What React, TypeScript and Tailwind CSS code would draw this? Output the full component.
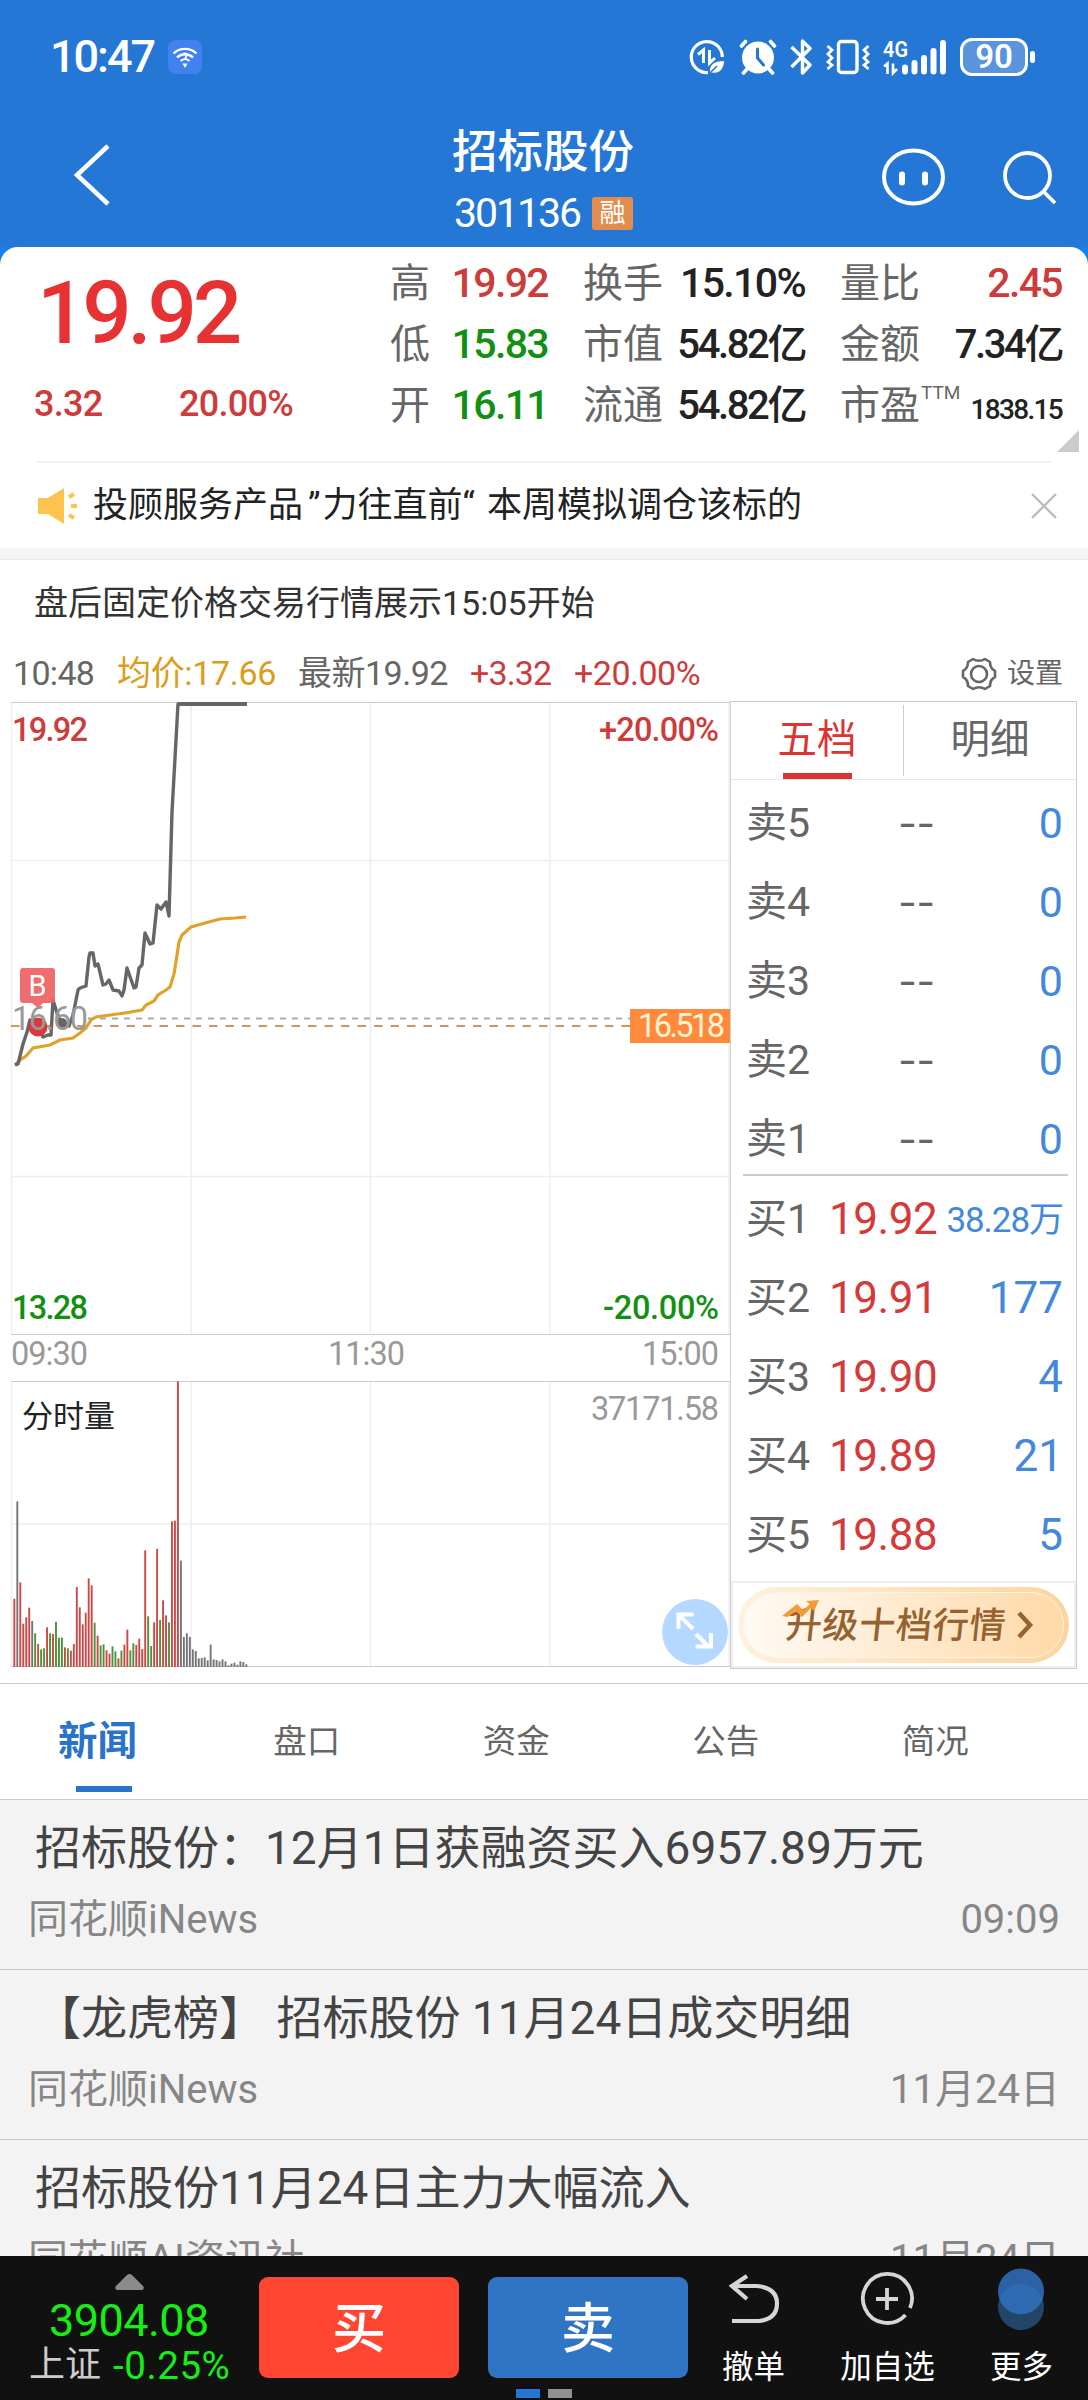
import type { ReactNode } from "react";
import { clsx } from "clsx";

const FONT = "font-['Roboto','Noto_Sans_CJK_SC',sans-serif]";
const SVG_FONT = "Roboto, 'Noto Sans CJK SC', sans-serif";

const pricePoints =
  "15,1065 18,1064 23,1044 27,1032 30,1020 37,1023 43,1037 48,1035 51,1035 53,1000 57,1013 60,1020 69,1026 73,1015 78,990 80,988 86,986 89,957 90,953 93,953 95,966 98,964 103,985 106,984 109,980 113,990 119,991 122,996 124,990 127,968 134,988 136,987 139,968 142,965 145,933 150,944 153,943 157,905 161,909 166,902 169,916 172,812 178,704 246,704";

const averagePoints =
  "15,1065 20,1060 26,1056 33,1048 50,1045 60,1040 73,1038 80,1033 86,1028 91,1020 96,1017 110,1015 125,1013 142,1010 146,1005 154,1001 158,995 166,990 170,987 174,974 177,955 179,942 182,935 191,927 205,923 220,919 235,918 246,917";

// one entry per minute: r = up, g = down, k = flat
const volumes =
  "r205 k497 r254 r130 r149 r178 k138 g101 r69 g53 g56 r119 g101 r99 g136 g88 g88 r59 g56 r49 r69 r240 r179 r128 r163 r266 r245 g133 r94 g65 g68 r50 r40 g62 g47 r26 g49 r67 r112 g50 g71 r66 r85 r54 r350 g152 g63 r134 r355 g141 r200 r155 g134 r437 r439 r857 k319 k90 k101 k90 k53 k48 k26 k27 k29 k20 k67 k23 k21 k17 k23 k17 k5 k10 k13 k7 k17 k15 k8".split(
    " "
  );

const volumeColor: Record<string, string> = {
  r: "#cb4a48",
  g: "#4f9239",
  k: "#747474",
};

const asks = ["卖5", "卖4", "卖3", "卖2", "卖1"];

const bids = [
  { label: "买1", price: "19.92", amount: "38.28万", small: true },
  { label: "买2", price: "19.91", amount: "177" },
  { label: "买3", price: "19.90", amount: "4" },
  { label: "买4", price: "19.89", amount: "21" },
  { label: "买5", price: "19.88", amount: "5" },
];

const news = [
  {
    title: "招标股份：12月1日获融资买入6957.89万元",
    source: "同花顺iNews",
    time: "09:09",
  },
  {
    title: "【龙虎榜】 招标股份 11月24日成交明细",
    source: "同花顺iNews",
    time: "11月24日",
  },
  {
    title: "招标股份11月24日主力大幅流入",
    source: "同花顺AI资讯社",
    time: "11月24日",
  },
];

function StatusBar() {
  return (
    <div className="flex h-[112px] items-center pt-[1px] pl-[50px]">
      <span className="w-[118px] text-[45px] font-medium tracking-[-0.045em]">
        10:47
      </span>
      <svg width="34" height="34" viewBox="0 0 34 34" fill="none" stroke="#fff">
        <rect width="34" height="34" rx="8" fill="#4083f0" stroke="none" />
        <path d="M5.5 13.5a16.5 16.5 0 0 1 23 0M9 17.5a11.5 11.5 0 0 1 16 0" strokeWidth="2.4" />
        <path d="M12.5 21a6.5 6.5 0 0 1 9 0M15 14.5q2-2 3.5 0c1 2-1.5 2.500-1.500 5" strokeWidth="1.8" />
        <path d="M14.500 23.500h5L17 28z" fill="#fff" stroke="none" />
      </svg>
      <div className="ml-[487px] flex items-center">
        {/* data saver */}
        <svg className="mr-[14px]" width="36" height="36" viewBox="0 0 36 36" fill="none" stroke="#fff" strokeWidth="3.2">
          <path d="M19 33.500A15.500 15.500 0 1 1 33.300 18" />
          <path d="M9 15.500l5.500-4.500v13M20.500 11v13l5.500-5" strokeWidth="3" />
          <path d="M21 34c-1-8 4-12 14-12C35 30 30 35 23 33.500z" fill="#fff" stroke="none" />
          <path d="M21 34l7-7" stroke="#2477d4" strokeWidth="1.600" />
        </svg>
        {/* alarm */}
        <svg className="mr-[13px]" width="38" height="36" viewBox="0 0 38 36" fill="none" stroke="#fff" strokeWidth="3.600" strokeLinecap="round">
          <circle cx="19" cy="18.500" r="16" fill="#fff" stroke="none" />
          <path d="M2.500 7l4-4.500M35.500 7l-4-4.500M8 30l-3.500 4M30 30l3.500 4" />
          <path d="M18.500 10v9l6 7" stroke="#2477d4" strokeWidth="3" />
        </svg>
        <svg className="mr-[13px]" width="23" height="36" viewBox="0 0 23 36" fill="none" stroke="#fff" strokeWidth="3.400" strokeLinejoin="round">
          <path d="M1.500 8L20 26l-7.500 8V2L20 9.500 1.500 28" />
        </svg>
        {/* vibrate */}
        <svg className="mr-[13px]" width="44" height="36" viewBox="0 0 44 36" fill="none" stroke="#fff" strokeWidth="3.400">
          <rect x="12.500" y="2.500" width="18.500" height="31" rx="3" />
          <path d="M1.500 7l4.500 4-4 4 4 4-4 4 4 3-4.500 4M42.500 7L38 11l4 4-4 4 4 4-4 3 4.500 4" strokeWidth="2.800" />
        </svg>
        {/* signal */}
        <svg className="overflow-visible" width="64" height="36" viewBox="0 0 64 36" fill="none" stroke="#fff">
          <text x="0" y="17.500" fontSize="22" fontWeight="600" fill="#fff" stroke="none" textLength="25" lengthAdjust="spacingAndGlyphs" fontFamily={SVG_FONT}>
            4G
          </text>
          <path d="M1 27.500l3.500-3V35M10 24.500V34l4-4" strokeWidth="2.600" />
          <path d="M22 28.500v4M31.500 24v8.500M41 19v13.500M50.500 12v20.500M60 4v28.500" strokeWidth="6" strokeLinecap="round" />
        </svg>
        <div className="ml-[13px] flex h-[38px] w-[68px] items-center justify-center rounded-[12px] border-3 border-white bg-[#5994dc] text-[33px] leading-[30px] font-semibold">
          90
        </div>
        <div className="ml-[2px] h-[12px] w-[5px] rounded-full bg-white" />
      </div>
    </div>
  );
}

function Header() {
  return (
    <div className="flex h-[135px] items-start">
      <svg className="mt-[30px] ml-[70px]" width="44" height="66" viewBox="0 0 44 66" fill="none" stroke="#fff" strokeWidth="4.500">
        <path d="M38 4L7 33l31 29" />
      </svg>
      <div className="ml-[224px] w-[412px] pl-[114px]">
        <div className="mt-[11px] text-[45.500px] leading-[60px] font-medium">
          招标股份
        </div>
        <div className="flex items-center pt-[8px] pl-[2px]">
          <span className="w-[138px] text-[41px] leading-[44px] tracking-[-0.05em]">
            301136
          </span>
          <span className="h-[33px] w-[41px] rounded-[3px] bg-[#e28d4d] text-center text-[26px] leading-[32px]">
            融
          </span>
        </div>
      </div>
      <svg className="mt-[35px] ml-[131px]" width="64" height="60" viewBox="0 0 64 60" fill="none" stroke="#fff">
        <ellipse cx="32.500" cy="30" rx="29.500" ry="26.500" strokeWidth="4" />
        <path d="M21 27.500v8M44 27.500v8" strokeWidth="6" strokeLinecap="round" />
      </svg>
      <svg className="mt-[35px] ml-[57px]" width="56" height="60" viewBox="0 0 56 60" fill="none" stroke="#fff" strokeWidth="3.800">
        <circle cx="25.500" cy="28.500" r="22.500" />
        <path d="M41.500 44.500L53 56" />
      </svg>
    </div>
  );
}

function Stat({
  label,
  value,
  color = "text-[#222]",
  children,
}: {
  label: string;
  value: string;
  color?: string;
  children?: ReactNode;
}) {
  const hasUnit = value.endsWith("亿");

  return (
    <div className="flex h-[61px] items-center justify-between whitespace-nowrap">
      <span className="flex text-[40px] leading-[61px] text-[#666]">
        {label}
        {children}
      </span>
      <span
        className={clsx(
          "font-medium",
          children && "pt-[9px] text-[28px] tracking-[-0.060em]",
          !children && hasUnit && "text-[40px] tracking-[-0.060em]",
          !children && !hasUnit && "text-[41px] tracking-[-0.040em]",
          color
        )}
      >
        {value}
      </span>
    </div>
  );
}

function Quote() {
  return (
    <div className="relative flex h-[214px] pt-[6px]">
      <div className="w-[390px] text-[#cc3c3a]">
        <div className="h-[121px] pl-[37px] text-[87px] leading-[121px] font-medium tracking-[-0.048em] text-[#e63232]">
          19.92
        </div>
        <div className="flex pl-[34px] text-[36px] leading-[60px] font-medium tracking-[-0.020em]">
          <span className="w-[145px]">3.32</span>
          <span>20.00%</span>
        </div>
      </div>
      <div className="w-[158px]">
        <Stat label="高" value="19.92" color="text-[#cc3c3a]" />
        <Stat label="低" value="15.83" color="text-[#129012]" />
        <Stat label="开" value="16.11" color="text-[#129012]" />
      </div>
      <div className="ml-[35px] w-[222px]">
        <Stat label="换手" value="15.10%" />
        <Stat label="市值" value="54.82亿" />
        <Stat label="流通" value="54.82亿" />
      </div>
      <div className="ml-[35px] w-[222px]">
        <Stat label="量比" value="2.45" color="text-[#cc3c3a]" />
        <Stat label="金额" value="7.34亿" />
        <Stat label="市盈" value="1838.15">
          <span className="ml-[1px] text-[19px] leading-[36px]">TTM</span>
        </Stat>
      </div>
      <svg className="absolute right-[9px] bottom-[9px]" width="22" height="22">
        <path d="M22 0v22H0z" fill="#cbcbcb" />
      </svg>
    </div>
  );
}

function Notice() {
  return (
    <div className="mr-[30px] ml-[35px] flex h-[85px] items-center text-[#222]">
      <svg className="ml-[3px] shrink-0" width="41" height="38" viewBox="0 0 41 38">
        <path d="M0 11h10L26 1v36L10 27H0z" fill="#fdc34e" />
        <path d="M31 10l5-3M33 19h6M31 28l5 3" stroke="#fdc34e" strokeWidth="4" />
      </svg>
      <span className="ml-[14px] pt-[2px] text-[35px] whitespace-nowrap">
        投顾服务产品<span className="mr-[2px] ml-[5px]">”</span>力往直前
        <span className="tracking-[0.100em]">“</span> 本周模拟调仓该标的
      </span>
      <svg className="ml-auto shrink-0" width="28" height="28" viewBox="0 0 28 28" stroke="#bbb" strokeWidth="2.400">
        <path d="M2 2l24 24M26 2L2 26" />
      </svg>
    </div>
  );
}

function ChartInfo() {
  return (
    <div className="flex h-[55px] items-center text-[34px] whitespace-nowrap text-[#666]">
      <span className="w-[105px] pl-[13px] tracking-[-0.020em]">10:48</span>
      <span className="w-[181px] pl-[12px] tracking-[-0.010em] text-[#dc9c1c]">
        均价:17.66
      </span>
      <span className="w-[184px] pl-[12px] tracking-[-0.015em]">
        最新19.92
      </span>
      <span className="w-[104px] tracking-[-0.025em] text-[#cc3c3a]">
        +3.32
      </span>
      <span className="tracking-[-0.015em] text-[#cc3c3a]">+20.00%</span>
      <svg className="ml-auto" width="36" height="36" viewBox="0 0 36 36" fill="none" stroke="#666" strokeWidth="2.600" strokeLinejoin="round">
        <path d="M12 3q6 3.500 12 0l5 3q0 6.500 5 9v6q-5 2.500-5 9l-5 3q-6-3.500-12 0l-5-3q0-6.500-5-9v-6q5-2.500 5-9z" />
        <circle cx="18" cy="18" r="8" />
      </svg>
      <span className="mr-[25px] ml-[10px] text-[28px]">设置</span>
    </div>
  );
}

function ChartText({
  x,
  y,
  w,
  fill,
  weight = 400,
  children,
}: {
  x: number;
  y: number;
  w: number;
  fill: string;
  weight?: number;
  children: string;
}) {
  return (
    <text
      x={x}
      y={y}
      textLength={w}
      lengthAdjust="spacing"
      fill={fill}
      fontSize="32.5"
      fontWeight={weight}
      fontFamily={SVG_FONT}
    >
      {children}
    </text>
  );
}

function PriceChart() {
  return (
    <svg className="block" width="730" height="680" viewBox="0 701 730 680">
      <path d="M11.500 702v632M191 702v632M370.500 702v632M550 702v632M729 702v632M11 860.500h719M11 1176.500h719" stroke="#eee" strokeWidth="1.500" />
      <path d="M11 702.500h719M11 1334.500h719" stroke="#ccc" />
      <path d="M88 1018.500h545" stroke="#aaa" strokeWidth="2" strokeDasharray="6 6" />
      <path d="M11 1026h620" stroke="#cf9563" strokeWidth="2" strokeDasharray="8.500 8" />
      <polyline points={averagePoints} fill="none" stroke="#dfa22a" strokeWidth="3.200" />
      <polyline points={pricePoints} fill="none" stroke="#666" strokeWidth="3.400" strokeLinejoin="round" />
      <path d="M178 704h69" stroke="#666" strokeWidth="4" />
      <circle cx="38" cy="1027" r="9.500" fill="#d93a3a" />
      <circle cx="62" cy="1023" r="5" fill="#666" />
      <path d="M23 968h29q3 0 3 3v29q0 3-3 3h-9l-5 5-6-5h-9q-3 0-3-3v-29q0-3 3-3z" fill="#ee6264" fillOpacity=".93" />
      <text x="37.500" y="996" textAnchor="middle" fontSize="29" fill="#fff" fontFamily={SVG_FONT}>
        B
      </text>
      <ChartText x={12} y={1030} w={76} fill="#999">16.60</ChartText>
      <ChartText x={12} y={741} w={76} fill="#cc3c3a" weight={500}>19.92</ChartText>
      <ChartText x={599} y={741} w={120} fill="#cc3c3a" weight={500}>+20.00%</ChartText>
      <ChartText x={12} y={1319} w={76} fill="#129012" weight={500}>13.28</ChartText>
      <ChartText x={603} y={1319} w={116} fill="#129012" weight={500}>-20.00%</ChartText>
      <rect x="630" y="1009" width="100" height="34" fill="#ff8a3c" />
      <ChartText x={638} y={1037} w={87} fill="#fff3d6">16.518</ChartText>
      <ChartText x={11} y={1365} w={77} fill="#999">09:30</ChartText>
      <ChartText x={328} y={1365} w={77} fill="#999">11:30</ChartText>
      <ChartText x={642} y={1365} w={77} fill="#999">15:00</ChartText>
    </svg>
  );
}

function VolumeChart() {
  return (
    <svg className="block" width="730" height="288" viewBox="0 1381 730 288">
      <path d="M11.500 1382v284M191 1382v284M370.500 1382v284M550 1382v284M729 1382v284M11 1524h719" stroke="#eee" strokeWidth="1.500" />
      <path d="M11 1381.500h719M11 1666.500h719" stroke="#ccc" />
      {volumes.map((v, i) => {
        const height = Number(v.slice(1)) / 3;
        return (
          <rect
            key={i}
            x={13.4 + i * 2.974}
            y={1667 - height}
            width="1.9"
            height={height}
            fill={volumeColor[v[0]]}
          />
        );
      })}
      <text x="22" y="1427" fontSize="31" fill="#222" fontFamily={SVG_FONT}>
        分时量
      </text>
      <ChartText x={591} y={1420} w={128} fill="#999">37171.58</ChartText>
      <circle cx="695" cy="1632" r="33" fill="#b4d8ff" />
      <path d="M693 1629l-13-13M678.500 1629v-14.500h15M696 1634l13 13M711 1633v13.500h-15.500" fill="none" stroke="#fff" strokeWidth="4" />
    </svg>
  );
}

function OrderBook() {
  return (
    <div className="w-[347px] border border-[#ccc] text-[#666]">
      <div className="flex h-[78px] border-b border-[#e8e8e8] text-[39.500px]">
        <div className="flex w-[172px] flex-col items-center text-[#dd3333]">
          <span className="h-[71px] leading-[76px]">五档</span>
          <span className="h-[6px] w-[69px] bg-[#dd3333]" />
        </div>
        <div className="my-[3px] w-px bg-[#ccc]" />
        <div className="flex-1 text-center leading-[76px]">明细</div>
      </div>
      <div className="mr-[8px] ml-[12px] flex h-[396px] flex-col border-b-2 border-[#ccc]">
        {asks.map((ask) => (
          <div
            key={ask}
            className="flex h-[79px] items-center pt-[8px] pr-[5px] pl-[3px] leading-[71px]"
          >
            <span className="w-[154px] text-[41px]">{ask}</span>
            <span className="origin-left scale-x-130 text-[42px] tracking-[0.060em]">
              --
            </span>
            <span className="ml-auto text-[43px] text-[#4388dd]">0</span>
          </div>
        ))}
      </div>
      <div className="mx-[12px] flex h-[405px] flex-col pt-[4px]">
        {bids.map((bid) => (
          <div
            key={bid.label}
            className="flex h-[79px] items-center pr-[1px] pl-[3px] leading-[79px]"
          >
            <span className="w-[83px] text-[41px]">{bid.label}</span>
            <span className="text-[44px] tracking-[-0.010em] text-[#d43a3a]">
              {bid.price}
            </span>
            <span
              className={clsx(
                "ml-auto text-[#4388dd]",
                bid.small
                  ? "pt-[2px] text-[35px] tracking-[-0.030em]"
                  : "text-[44px]"
              )}
            >
              {bid.amount}
            </span>
          </div>
        ))}
      </div>
      <div className="flex h-[87px] items-center border-2 border-[#eee] px-[5px]">
        <div className="flex h-[76px] w-full rounded-full bg-gradient-to-r from-[#fef1df] to-[#fdd4a0] p-[5px]">
          <div className="relative flex w-full items-center rounded-full border-[1.500px] border-[#fff4e2] bg-gradient-to-r from-[#fffaf4] to-[#ffd9a8] pl-[42px] text-[36px] text-[#946330]">
            <span className="-skew-x-6 pt-[2px] font-medium tracking-[0.020em]">
              升级十档行情
            </span>
            <svg className="ml-[11px]" width="17" height="28" viewBox="0 0 17 28" fill="none" stroke="#946330" strokeWidth="4.500">
              <path d="M2 2l11 12L2 26" />
            </svg>
            <svg className="absolute top-[7px] left-[38px]" width="38" height="18" viewBox="0 0 38 18">
              <path d="M0 16L15 4l6 6 7-6-4-3L37 0l-5 11-3-3-9 9-6-6-8 6z" fill="#f29c38" />
            </svg>
          </div>
        </div>
      </div>
    </div>
  );
}

function Tabs() {
  return (
    <div className="flex h-[117px] border-y border-[#c8c8c8] bg-white pr-[48px] text-[33.500px] leading-[116px] text-[#666]">
      <div className="flex w-[202px] flex-col pl-[58px]">
        <span className="h-[102px] text-[39.500px] font-bold text-[#2a73c9]">
          新闻
        </span>
        <span className="ml-[18px] h-[6px] w-[56px] bg-[#2a73c9]" />
      </div>
      {["盘口", "资金", "公告", "简况"].map((tab) => (
        <span key={tab} className="flex-1 text-center">
          {tab}
        </span>
      ))}
    </div>
  );
}

function NewsList() {
  return (
    <div className="h-[456px] overflow-hidden bg-[#f3f3f3]">
      {news.map((item) => (
        <div key={item.title} className="h-[170px] border-b border-[#c8c8c8] pt-[18px]">
          <div className="pl-[35px] text-[46px] leading-[60px] whitespace-pre text-[#444]">
            {item.title}
          </div>
          <div className="flex justify-between pt-[12px] pr-[28px] pl-[28px] text-[40px] leading-[60px] text-[#868686]">
            <span>{item.source}</span>
            <span>{item.time}</span>
          </div>
        </div>
      ))}
    </div>
  );
}

function Action({ label, children }: { label: string; children: ReactNode }) {
  return (
    <div className="flex flex-col items-center pt-[10px] text-[31.500px] leading-[40px]">
      <div className="h-[82px]">{children}</div>
      {label}
    </div>
  );
}

function BottomBar() {
  return (
    <div className="relative flex h-[144px] bg-[#111] text-white">
      <div className="w-[259px]">
        <svg className="mt-[18px] ml-[115px]" width="29" height="16">
          <path d="M12 1q2.500-2 5 0l11 11q2 3-1 4H2q-3-1-1-4z" fill="#8b8b8b" />
        </svg>
        <div className="mt-[6px] pl-[49px] text-[45px] leading-[50px] tracking-[-0.012em] text-[#16ee16]">
          3904.08
        </div>
        <div className="flex items-center pl-[29px] text-[36px] leading-[39px] text-[#ccc]">
          上证
          <span className="ml-[12px] text-[38.500px] tracking-[0.015em] text-[#16ee16]">
            -0.25%
          </span>
        </div>
      </div>
      <div className="mt-[21px] flex h-[101px] w-[200px] items-center justify-center rounded-[9px] bg-[#ff4632] pt-[3px] text-[54px] font-medium">
        买
      </div>
      <div className="mt-[21px] ml-[29px] flex h-[101px] w-[200px] items-center justify-center rounded-[9px] bg-[#3075c4] pt-[3px] text-[54px] font-medium">
        卖
      </div>
      <div className="ml-[34px] flex w-[331px] justify-between">
        <Action label="撤单">
          <svg width="54" height="60" viewBox="0 0 54 60" fill="none" stroke="#d6d6d6" strokeWidth="4.200">
            <path d="M20 10L5 20l15 13" />
            <path d="M5 20h25q20 2 20 17.500T32 55H5" />
          </svg>
        </Action>
        <Action label="加自选">
          <svg width="56" height="62" viewBox="0 0 56 62" fill="none" stroke="#d6d6d6" strokeWidth="3.800">
            <path d="M46.500 49A24.500 24.500 0 1 1 51 42" />
            <path d="M17 33h22M28 22v22" />
          </svg>
        </Action>
        <Action label="更多">
          <svg width="48" height="66" viewBox="0 0 48 66">
            <circle cx="24" cy="41" r="23" fill="#234567" />
            <circle cx="24" cy="25.500" r="23" fill="#2c62a4" />
            <path d="M2.500 33a23 23 0 0 1 43 0a23 23 0 0 1-43 0z" fill="#2e6bb3" />
          </svg>
        </Action>
      </div>
      <div className="absolute bottom-[2px] left-[516px] flex gap-[8px]">
        <span className="h-[9px] w-[24px] bg-[#2477d4]" />
        <span className="h-[9px] w-[24px] bg-[#909090]" />
      </div>
    </div>
  );
}

export default function App() {
  return (
    <div className={clsx("w-[1088px] bg-white", FONT)}>
      <div className="h-[247px] bg-[#2477d4] text-white">
        <StatusBar />
        <Header />
      </div>
      <div className="bg-[#1680f0]">
        <div className="rounded-t-[18px] bg-white">
          <Quote />
          <div className="mr-[35px] ml-[35px] h-[2px] bg-[#f2f2f2]" />
          <Notice />
        </div>
      </div>
      <div className="h-[12px] border-b border-[#e8e8e8] bg-[#f4f4f4]" />
      <div className="flex h-[86px] items-center pt-[1px] pl-[34px] text-[34px] text-[#333]">
        盘后固定价格交易行情展示15:05开始
      </div>
      <ChartInfo />
      <div className="flex">
        <div>
          <PriceChart />
          <VolumeChart />
        </div>
        <OrderBook />
      </div>
      <div className="h-[14px]" />
      <Tabs />
      <NewsList />
      <BottomBar />
    </div>
  );
}
